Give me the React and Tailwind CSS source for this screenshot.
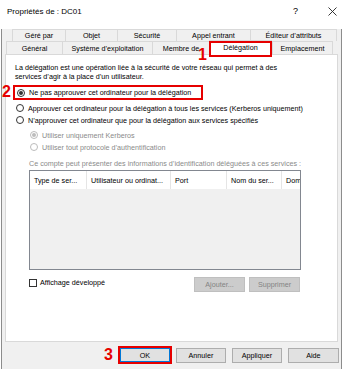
import React from 'react';

const RED = 'border-[#e60000]';

function Radio({ checked, disabled }) {
  return (
    <span
      className={`flex h-[8px] w-[8px] shrink-0 items-center justify-center rounded-full border bg-white ${
        disabled ? 'border-[#bcbcbc]' : 'border-[#333333]'
      }`}
    >
      {checked && (
        <span className={`h-[4px] w-[4px] rounded-full ${disabled ? 'bg-[#bcbcbc]' : 'bg-[#333333]'}`} />
      )}
    </span>
  );
}

function RadioRow({ label, checked, disabled, indent }) {
  return (
    <div className={`flex h-[12px] items-center gap-[4px] ${indent ? 'pl-[15px]' : 'pl-[1px]'}`}>
      <Radio checked={checked} disabled={disabled} />
      <span className={disabled ? 'text-[#8a8a8a]' : 'text-black'}>{label}</span>
    </div>
  );
}

function Tab({ label, w, last, h }) {
  return (
    <div
      className={`flex shrink-0 items-center justify-center border-l border-t border-[#d9d9d9] bg-[#f0f0f0] ${
        last ? 'border-r' : ''
      } ${h}`}
      style={{ width: w }}
    >
      {label}
    </div>
  );
}

function Btn({ label, disabled, w = 'w-[50px]' }) {
  return (
    <div
      className={`flex h-[15px] ${w} items-center justify-center border ${
        disabled ? 'border-[#bfbfbf] bg-[#cccccc] text-[#838383]' : 'border-[#adadad] bg-[#e1e1e1] text-black'
      }`}
    >
      {label}
    </div>
  );
}

export default function App() {
  const row1 = [
    ['Géré par', 53],
    ['Objet', 52],
    ['Sécurité', 59],
    ['Appel entrant', 74],
    ['Éditeur d’attributs', 87],
  ];

  return (
    <div className="relative h-[369px] w-[344px] overflow-hidden bg-white font-['Liberation_Sans',Arial,sans-serif] text-[7.2px] leading-[9px] text-black">
      <div className="ml-[1px] w-[341px]">
        {/* title bar */}
        <div className="flex h-[22px] items-center bg-white pl-[6px] text-[8px]">
          <span>Propriétés de : DC01</span>
          <span className="ml-auto mr-[30px] text-[9px] font-light">?</span>
          <svg width="9" height="9" viewBox="0 0 9 9" className="mr-[5px]">
            <path d="M0.5 0.5 L8.5 8.5 M8.5 0.5 L0.5 8.5" stroke="#222" strokeWidth="0.9" />
          </svg>
        </div>

        <div className="h-[347px] border-b border-l border-r border-[#8c8c8c] bg-[#f0f0f0]">
          {/* tabs */}
          <div className="ml-[10px] mt-[7px] flex h-[12px]">
            {row1.map(([l, w], i) => (
              <Tab key={l} label={l} w={w} last={i === row1.length - 1} h="h-[12px]" />
            ))}
          </div>
          <div className="ml-[4px] flex h-[13px] items-start">
            <Tab label="Général" w={56} h="h-[13px]" />
            <Tab label="Système d’exploitation" w={90} h="h-[13px]" />
            <Tab label="Membre de" w={57} h="h-[13px]" />
            <div className="relative z-10 -mt-[1px] flex h-[15px] w-[63px] shrink-0 items-start justify-center border-l border-r border-t border-[#d9d9d9] bg-white pt-[2px]">
              Délégation
              <span className={`absolute -bottom-[2px] -left-[1px] -right-[1px] top-0 border-2 ${RED}`} />
            </div>
            <Tab label="Emplacement" w={61} last h="h-[13px]" />
          </div>

          {/* panel */}
          <div className="ml-[3px] h-[288px] w-[333px] border border-[#d9d9d9] bg-white pl-[9px] pt-[8px]">
            <p>
              La délégation est une opération liée à la sécurité de votre réseau qui permet à des
              <br />
              services d’agir à la place d’un utilisateur.
            </p>

            <div className={`-ml-[2px] mt-[4px] flex h-[15px] w-[190px] items-center gap-[4px] border-2 ${RED} pl-[2px]`}>
              <Radio checked />
              <span>Ne pas approuver cet ordinateur pour la délégation</span>
            </div>
            <div className="mt-[2px]">
              <RadioRow label="Approuver cet ordinateur pour la délégation à tous les services (Kerberos uniquement)" />
              <RadioRow label="N’approuver cet ordinateur que pour la délégation aux services spécifiés" />
            </div>
            <div className="mt-[3px]">
              <RadioRow label="Utiliser uniquement Kerberos" checked disabled indent />
              <RadioRow label="Utiliser tout protocole d’authentification" disabled indent />
            </div>
            <div className="ml-[14px] mt-[4px] flex h-[12px] items-center text-[#8a8a8a]">
              Ce compte peut présenter des informations d’identification déléguées à ces services :
            </div>

            {/* list view */}
            <div className="ml-[14px] mt-[1px] flex h-[100px] w-[272px] flex-col overflow-hidden border border-[#828790] bg-[#f0f0f0]">
              <div className="flex h-[18px] shrink-0 bg-white">
                {[
                  ['Type de ser...', 57],
                  ['Utilisateur ou ordinat...', 84],
                  ['Port', 56],
                  ['Nom du ser...', 55],
                  ['Dom', 40],
                ].map(([l, w]) => (
                  <div
                    key={l}
                    className="flex h-full shrink-0 items-center overflow-hidden whitespace-nowrap border-r border-[#e5e5e5] pl-[4px]"
                    style={{ width: w }}
                  >
                    {l}
                  </div>
                ))}
              </div>
            </div>

            <div className="ml-[14px] mt-[7px] flex h-[15px] w-[272px] items-start">
              <div className="mt-[1px] flex items-center gap-[3px]">
                <span className="h-[8px] w-[8px] border border-[#333333] bg-white" />
                <span>Affichage développé</span>
              </div>
              <div className="ml-auto mr-[1px] flex gap-[4px]">
                <Btn label="Ajouter..." disabled w="w-[51px]" />
                <Btn label="Supprimer" disabled w="w-[51px]" />
              </div>
            </div>
          </div>

          {/* dialog buttons */}
          <div className="mt-[4px] flex h-[18px] items-center">
            <span className="ml-[102px] text-[16px] font-bold leading-[16px] text-[#e60000]">3</span>
            <div className={`ml-[5px] border-2 ${RED}`}>
              <div className="flex h-[14px] w-[50px] items-center justify-center border border-[#0078d7] bg-[#e1e1e1]">
                OK
              </div>
            </div>
            <div className="ml-[4px]">
              <Btn label="Annuler" />
            </div>
            <div className="ml-[6px]">
              <Btn label="Appliquer" />
            </div>
            <div className="ml-[6px]">
              <Btn label="Aide" w="w-[51px]" />
            </div>
          </div>
        </div>
      </div>

      {/* annotations */}
      <span className="absolute left-[198px] top-[47px] text-[16px] font-bold leading-[16px] text-[#e60000]">1</span>
      <span className="absolute left-[2px] top-[84px] text-[16px] font-bold leading-[16px] text-[#e60000]">2</span>
    </div>
  );
}
